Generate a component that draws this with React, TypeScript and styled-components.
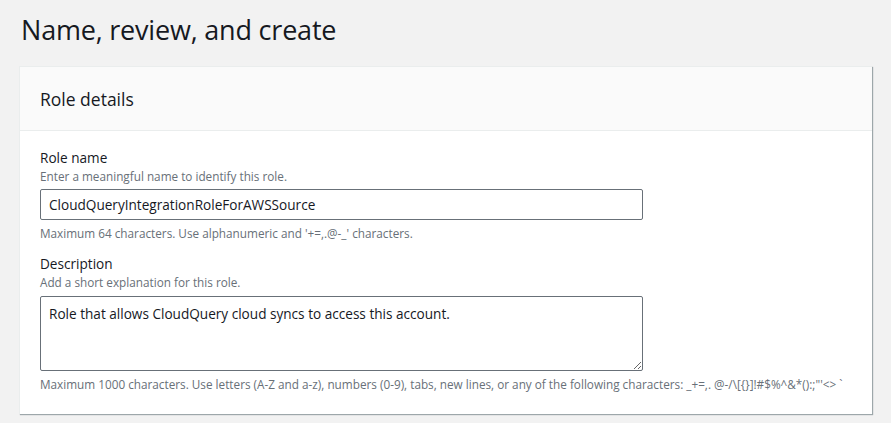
import React from "react";
import styled, { createGlobalStyle } from "styled-components";

const Global = createGlobalStyle`
  html, body { margin: 0; padding: 0; background: #f2f2f2; }
  body { font-family: "Open Sans", "Noto Sans", sans-serif; color: #16191f; }
  * { box-sizing: border-box; }
`;

const Page = styled.div`
  padding: 12px 19px 11px 19px;
  width: 891px;
  height: 423px;
  overflow: hidden;
`;

const Title = styled.h1`
  margin: 0 0 0 2px;
  font-size: 27px;
  font-weight: 400;
  line-height: 36px;
  color: #16191f;
  letter-spacing: -0.2px;
`;

const Card = styled.section`
  margin-top: 18px;
  width: 853px;
  background: #fff;
  border-top: 1px solid #eaeded;
  border-left: 1px solid #eaeded;
  box-shadow: 1px 1px 1px 0 rgba(0, 28, 36, 0.35);
`;

const CardHeader = styled.div`
  background: #fafafa;
  border-bottom: 1px solid #eaeded;
  height: 64px;
  display: flex;
  align-items: center;
  padding: 0 20px;
`;

const CardTitle = styled.h2`
  margin: 0;
  font-size: 17.5px;
  font-weight: 400;
  line-height: 22px;
  color: #16191f;
`;

const CardBody = styled.div`
  padding: 17px 20px 22px 20px;
  display: flex;
  flex-direction: column;
  gap: 13px;
`;

const Field = styled.div`
  display: flex;
  flex-direction: column;
`;

const Label = styled.label`
  font-size: 13.6px;
  line-height: 20px;
  color: #16191f;
`;

const Hint = styled.div<{ $top?: number }>`
  font-size: 11.75px;
  line-height: 16px;
  color: #687078;
  margin-top: ${(p) => p.$top ?? 0}px;
  white-space: nowrap;
`;

const Input = styled.input`
  margin-top: 5px;
  width: 603px;
  height: 31px;
  border: 1px solid #687078;
  border-radius: 2px;
  padding: 0 8px;
  font-family: inherit;
  font-size: 13.6px;
  color: #16191f;
  background: #fff;
  outline: none;
`;

const TextArea = styled.textarea`
  margin-top: 6px;
  width: 603px;
  height: 75px;
  border: 1px solid #687078;
  border-radius: 2px;
  padding: 7px 8px;
  font-family: inherit;
  font-size: 13.6px;
  line-height: 20px;
  color: #16191f;
  background: #fff;
  outline: none;
  resize: vertical;
  display: block;
`;

export default function App() {
  return (
    <Page>
      <Global />
      <Title>Name, review, and create</Title>
      <Card>
        <CardHeader>
          <CardTitle>Role details</CardTitle>
        </CardHeader>
        <CardBody>
          <Field>
            <Label>Role name</Label>
            <Hint>Enter a meaningful name to identify this role.</Hint>
            <Input defaultValue="CloudQueryIntegrationRoleForAWSSource" />
            <Hint $top={5}>Maximum 64 characters. Use alphanumeric and '+=,.@-_' characters.</Hint>
          </Field>
          <Field>
            <Label>Description</Label>
            <Hint>Add a short explanation for this role.</Hint>
            <TextArea defaultValue="Role that allows CloudQuery cloud syncs to access this account." />
            <Hint $top={5}>
              Maximum 1000 characters. Use letters (A-Z and a-z), numbers (0-9), tabs, new lines, or any of the following characters: _+=,. @-/\[{"{}"}]!#$%^&*():;"'&lt;&gt; `
            </Hint>
          </Field>
        </CardBody>
      </Card>
    </Page>
  );
}
